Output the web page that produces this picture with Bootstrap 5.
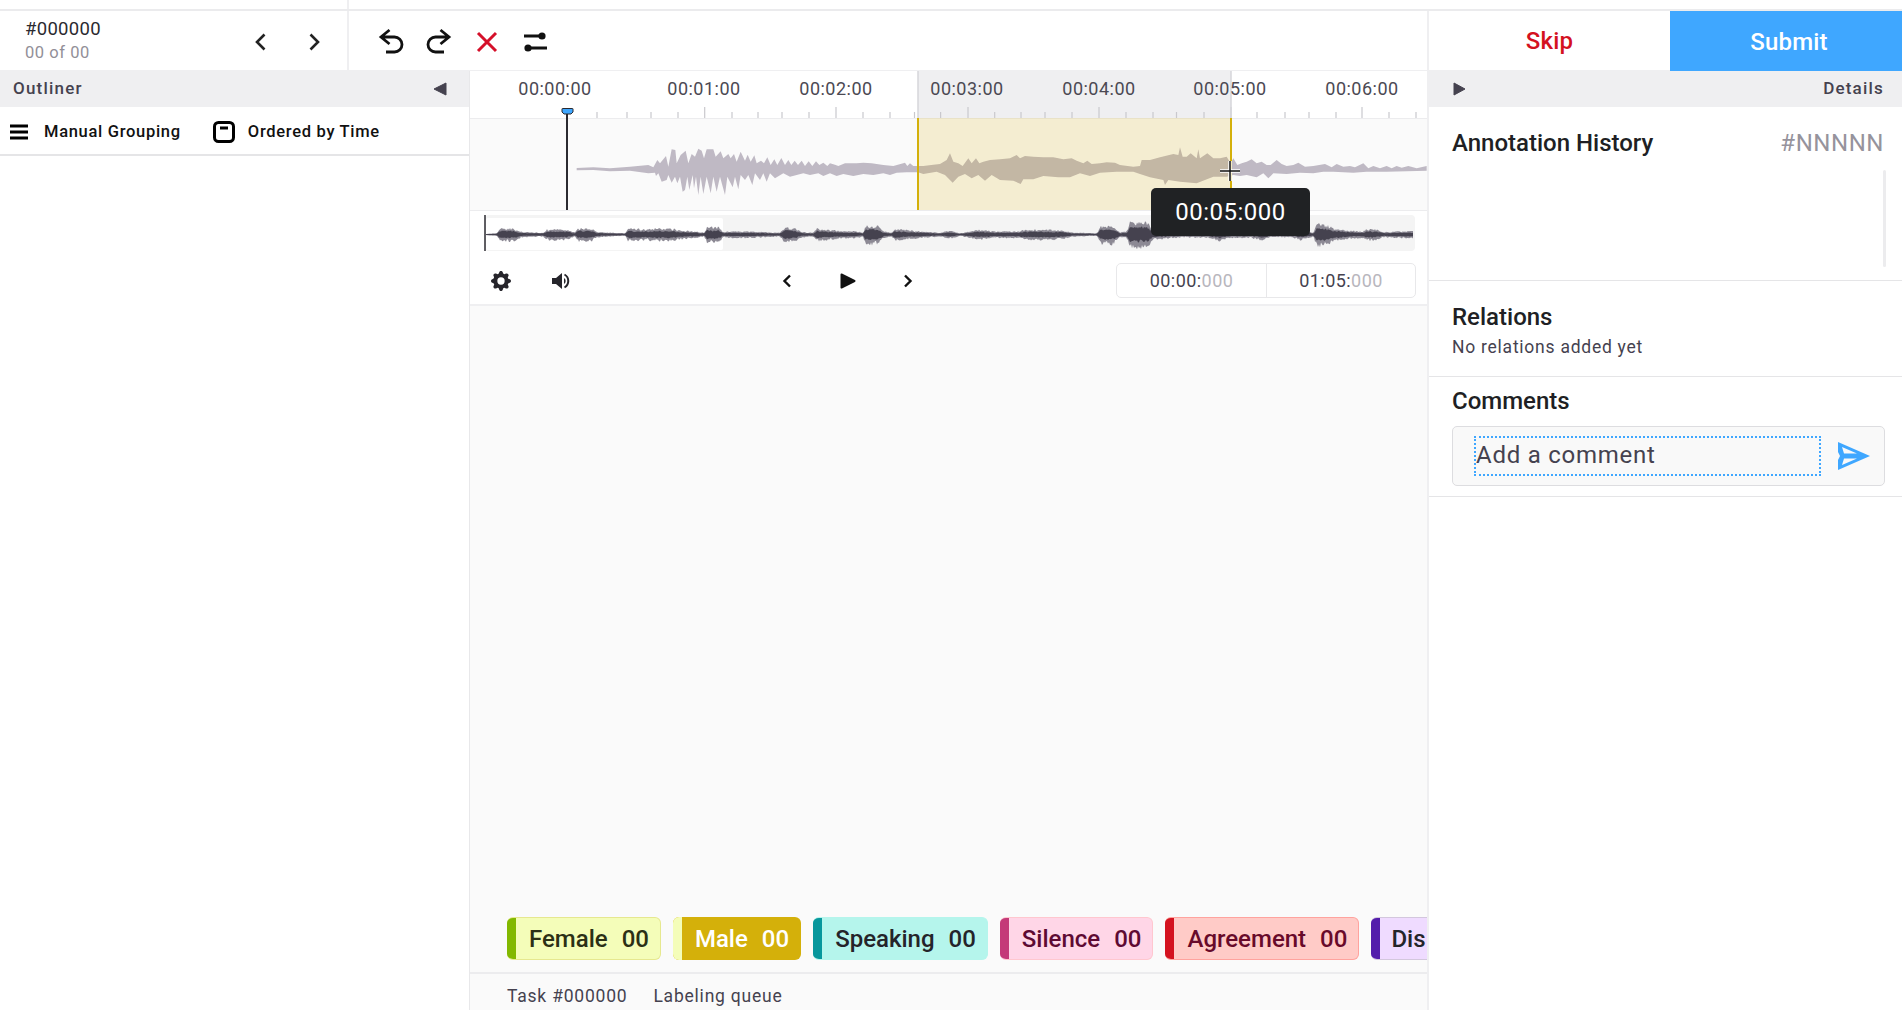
<!DOCTYPE html>
<html lang="en">
<head>
<meta charset="utf-8">
<title>Audio labeling</title>
<link href="https://cdn.jsdelivr.net/npm/bootstrap@5.3.0/dist/css/bootstrap.min.css" rel="stylesheet">
<style>
html,body{height:100%;overflow:hidden}
body{font-family:Roboto,"Liberation Sans",sans-serif;color:#201f24;background:#fff}
.app-shell{height:1010px;overflow:hidden}
.strip-top{height:11px;border-bottom:2px solid #ebebed}
.strip-top>div{width:349px;height:100%;border-right:2px solid #efeff1}
.work-col{width:1429px;border-right:2px solid #efeff1}
.side-col{width:473px}
.tool-bar{height:60px}
.task-cell{width:349px;padding-left:25px;padding-top:1px;border-right:2px solid #efeff1;border-bottom:1px solid #efeff1}
.task-id{font-size:18.5px;letter-spacing:.3px;line-height:24px;color:#2b2a30}
.task-count{font-size:16.5px;letter-spacing:.55px;line-height:24px;color:#928f98}
.chev-a{margin-left:auto}.chev-a svg,.chev-b svg{display:block;margin-top:2px}
.chev-a{margin-right:39px}.chev-b{margin-right:26px}
.tool-icons{padding-left:29px;padding-top:2px;gap:22px;border-bottom:1px solid #efeff1}
.tool-icons svg{display:block}
.panel-head{height:36px;background:#efeff1;color:#45424f;font-size:17px;font-weight:500;letter-spacing:1.2px}
.outliner-col{width:470px;border-right:1px solid #e8e8ea}
.group-row{height:49px;padding-top:3px;border-bottom:2px solid #e5e5e7;font-size:16.5px;font-weight:500;letter-spacing:.7px;color:#111}
.center-col{width:957px;background:#fafafa}
.wave-box{height:180px;background:#fff;position:relative}
.wave-box svg{display:block}
.ruler-label{font:400 18px Roboto,sans-serif;letter-spacing:.5px;fill:#4b4953}
.hover-tip{position:absolute;left:681px;top:117px;width:159px;height:48px;background:#202224;color:#fff;border-radius:5px;font-size:24px;letter-spacing:.5px;font-weight:400}
.cross-mark{position:absolute;left:749px;top:89px}
.player-bar{height:55px;background:#fff;border-bottom:2px solid #efeff1;position:relative;padding:6px 11px 0 0}
.time-box{height:35px;width:300px;border:1px solid #e8e8ea;border-radius:5px;font-size:18px;letter-spacing:.45px;color:#45424f}
.time-box>div{flex:1 1 50%}.time-box>div+div{border-left:1px solid #e8e8ea}
.time-ms{color:#b8b6bd}
.tag-row{padding-left:37px;gap:12px;height:43px;overflow:hidden;margin-top:auto}
.tag-pill{height:43px;flex:none;border-radius:6px;border:1px solid;border-left-width:0;font-size:24px;font-weight:500;display:flex;align-items:center;overflow:hidden;white-space:nowrap;line-height:1}
.tag-pill::before{content:"";width:9px;align-self:stretch;background:var(--strip);flex:none;margin-right:13px}
.tag-pill b{font-weight:500;margin-left:14px;margin-right:11px}
.tag-female{--strip:#82b800;background:#f4fdb9;border-color:#e6e88f;color:#2b3015}
.tag-male{--strip:#f4fdb9;background:#d4b00a;border-width:0;color:#fff}
.tag-male b{margin-right:12px}
.tag-speak{--strip:#08979c;background:#b5f5ec;border-color:#b5f5ec;color:#24242a}
.tag-silence{--strip:#c43a78;background:#ffd6e7;border-color:#ffc7cf;color:#5e0a33}
.tag-agree{--strip:#d4121f;background:#ffcbc7;border-color:#ffa39e;color:#680a2a}
.tag-dis{--strip:#531dab;background:#efdbff;border-color:#d3c7dd;color:#24242a;width:120px}
.tag-dis::before{margin-right:11px}
.foot-line{height:38px;margin-top:12px;border-top:2px solid #ececee;padding:13px 0 0 37px;gap:26px;font-size:17.5px;letter-spacing:.78px;line-height:18px;color:#45424f;white-space:nowrap}
.act-skip,.act-submit{height:60px;border:0;border-radius:0;font-size:24px;font-weight:500;padding:1px 0 0;letter-spacing:.2px}
.act-skip{width:241px;background:#fff;color:#d4121f;border-bottom:1px solid #efeff1}
.act-skip:hover{background:#fff;color:#d4121f}
.act-submit{width:232px;background:#3fa7ff;color:#fff;padding-left:6px}
.act-submit:hover{background:#3fa7ff;color:#fff}
.sect-title{font-size:24px;font-weight:500;line-height:28px;color:#201f24}
.sect-note{font-size:17.5px;letter-spacing:.75px;color:#45424f;line-height:20px;margin-top:6px}
.history-sect{height:174px;padding:22px 18px 0 23px;border-bottom:1px solid #e5e5e7;position:relative}
.history-id{font-size:24px;color:#96939c;letter-spacing:.55px;font-weight:400;line-height:28px}
.scroll-thumb{position:absolute;right:16px;top:63px;width:3px;height:97px;background:#ececee;border-radius:2px}
.rel-sect{height:96px;padding:22px 18px 0 23px;border-bottom:1px solid #e5e5e7}
.com-sect{height:120px;padding:10px 17px 0 23px;border-bottom:1px solid #e5e5e7}
.com-box{height:60px;margin-top:11px;background:#f9f9f9;border:1px solid #dddde0;border-radius:5px;padding:0 14px 0 21px}
.com-input{width:347px;height:40px;border:2px dotted #3fa7ff;font-size:24px;letter-spacing:.75px;color:#45424f;line-height:34px;white-space:nowrap}
</style>
</head>
<body>
<div class="app-shell">
  <div class="strip-top"><div></div></div>
  <div class="d-flex">
    <div class="work-col d-flex flex-column" style="height:999px">
      <div class="tool-bar d-flex">
        <div class="task-cell d-flex align-items-center">
          <div>
            <div class="task-id">#000000</div>
            <div class="task-count">00 of 00</div>
          </div>
          <div class="chev-a"><svg width="14" height="20" viewBox="0 0 14 20"><path d="M10.5 2.5 3 10l7.500 7.500" fill="none" stroke="#222" stroke-width="2.6"/></svg></div>
          <div class="chev-b"><svg width="14" height="20" viewBox="0 0 14 20"><path d="M3.500 2.500 11 10l-7.500 7.500" fill="none" stroke="#222" stroke-width="2.6"/></svg></div>
        </div>
        <div class="tool-icons d-flex align-items-center flex-grow-1">
          <svg width="26" height="28" viewBox="0 0 26 28"><path d="M11.500 2 3 9l8.500 7M3 9h13.500a7.500 7.500 0 0 1 0 15H8" fill="none" stroke="#111" stroke-width="2.800"/></svg>
          <svg width="26" height="28" viewBox="0 0 26 28"><path d="M14.500 2 23 9l-8.500 7M23 9H9.500a7.500 7.500 0 0 0 0 15H18" fill="none" stroke="#111" stroke-width="2.800"/></svg>
          <svg width="26" height="26" viewBox="0 0 26 26"><path d="M4 4l18 18M22 4 4 22" fill="none" stroke="#d5102a" stroke-width="3"/></svg>
          <svg width="26" height="26" viewBox="0 0 26 26"><path d="M2 7h17M8 19h17" fill="none" stroke="#111" stroke-width="2.800"/><circle cx="20" cy="7" r="3.600" fill="#111"/><circle cx="6" cy="19" r="3.600" fill="#111"/></svg>
        </div>
      </div>
      <div class="d-flex flex-grow-1" style="min-height:0">
        <div class="outliner-col">
          <div class="panel-head d-flex align-items-center justify-content-between" style="padding:0 22px 0 13px">
            <span>Outliner</span>
            <svg width="14" height="14" viewBox="0 0 14 14"><path d="M13 1v12L1 7z" fill="#45424f" stroke="#45424f" stroke-linejoin="round"/></svg>
          </div>
          <div class="group-row d-flex align-items-center" style="padding-left:10px">
            <svg width="18" height="16" viewBox="0 0 18 16" class="me-3"><path d="M0 2h18M0 8h18M0 14h18" stroke="#000" stroke-width="3"/></svg>
            <span>Manual Grouping</span>
            <svg width="22" height="22" viewBox="0 0 22 22" style="margin:0 13px 0 32px"><rect x="1.500" y="1.500" width="19" height="19" rx="4" fill="none" stroke="#000" stroke-width="3"/><rect x="7" y="5.500" width="8" height="3" fill="#000"/></svg>
            <span>Ordered by Time</span>
          </div>
        </div>
        <div class="center-col d-flex flex-column" style="min-width:0">
          <div class="wave-box">
            <svg width="957" height="180" viewBox="470 71 957 180" aria-label="Waveform">
              <rect x="918" y="71" width="313" height="47" fill="#efeff1"/>
              <rect x="470" y="118" width="957" height="92" fill="#fafafa"/>
              <path d="M470 118.500h957M470 210.500h957" stroke="#ececee"/>
              <path id="rulerTicks" fill="none" stroke="#c9c8cd" stroke-width="1.200" d=""/>
              <g transform="translate(570 130) scale(.33333)"><polygon fill="#bfb9c4" points="20,114 70,112 120,115 180,110 235,105 250,112 262,90 270,100 288,78 295,110 305,58 316,60 320,100 332,75 347,62 355,100 365,72 375,80 385,56 395,62 402,85 410,58 430,58 437,80 452,64 460,85 475,72 482,85 492,72 500,95 512,65 525,92 533,74 542,95 553,76 560,100 573,92 582,100 592,82 602,105 613,88 622,105 634,84 645,105 655,90 664,105 674,92 684,105 695,92 705,108 716,94 727,108 738,94 748,105 760,98 772,108 780,100 795,104 805,108 825,100 840,100 860,100 880,98 905,100 940,105 970,108 1005,98 1012,108 1020,100 1030,108 1044,108 1060,108 1090,104 1110,102 1130,90 1140,70 1150,95 1165,100 1178,108 1195,85 1205,100 1218,85 1228,100 1240,95 1260,90 1290,88 1290,150 1265,135 1245,152 1225,135 1205,145 1185,132 1165,140 1148,158 1125,135 1100,125 1060,132 1044,127 1010,127 980,128 960,135 940,130 910,135 880,132 850,138 820,132 800,138 780,130 760,138 745,130 720,135 700,130 680,135 660,140 640,130 615,145 600,130 590,155 580,130 570,150 555,130 547,165 535,135 525,150 512,135 505,178 495,140 488,172 472,140 465,195 450,140 440,185 430,140 422,190 410,140 400,192 392,140 385,195 378,140 372,175 368,135 358,180 352,140 345,180 338,185 330,140 322,160 315,140 305,158 295,135 290,150 275,155 265,130 258,138 255,128 235,130 180,122 120,124 70,120 20,121"/></g>
              <g transform="translate(1000 130) scale(.33333)"><polygon fill="#bfb9c4" points="0,88 30,85 50,75 60,85 75,78 100,80 130,82 160,82 190,88 215,85 230,92 250,100 262,92 275,102 300,100 320,97 345,98 360,105 400,110 420,108 425,90 450,90 480,82 520,72 535,75 540,52 548,80 560,80 572,70 590,85 595,58 600,85 622,70 640,85 660,85 680,80 692,100 700,85 712,105 725,100 740,95 755,88 770,100 785,95 800,105 812,105 830,90 845,102 860,108 880,105 895,98 915,110 940,108 975,102 995,112 1010,102 1030,110 1050,108 1065,112 1090,100 1105,115 1120,108 1140,115 1160,108 1175,115 1190,108 1205,113 1225,108 1250,115 1280,108 1280,122 1160,125 1100,125 1060,128 1000,125 970,125 940,130 900,128 860,132 820,130 805,145 790,130 770,142 740,135 720,138 700,135 680,140 640,140 590,160 540,155 505,150 495,165 490,150 450,142 420,132 400,125 350,125 300,128 270,138 240,130 210,142 175,142 130,138 100,148 70,148 62,162 40,152 0,150"/></g>
              <rect x="918" y="118" width="313" height="92" fill="#dbaf00" fill-opacity=".16"/>
              <path d="M918 118v92M1231 118v92" stroke="#d4b00a" stroke-width="2"/>
              <path d="M918 71v47M1231 71v47" stroke="#d6d6da" stroke-width="1.500"/>
              <g class="ruler-label" text-anchor="middle">
                <text x="555" y="95">00:00:00</text>
                <text x="704" y="95">00:01:00</text>
                <text x="836" y="95">00:02:00</text>
                <text x="967" y="95">00:03:00</text>
                <text x="1099" y="95">00:04:00</text>
                <text x="1230" y="95">00:05:00</text>
                <text x="1362" y="95">00:06:00</text>
              </g>
              <path d="M567 114v96" stroke="#2b2a30" stroke-width="2"/>
              <path d="M562.500 108.500h10a.500.500 0 0 1 .500.500v3l-2 2h-7l-2-2v-3a.500.500 0 0 1 .500-.500z" fill="#3fa7ff" stroke="#2b2a30"/>
              <rect x="485" y="215" width="930" height="36" rx="4" fill="#f4f4f4"/>
              <rect x="486" y="218" width="237" height="32" rx="2" fill="#fff"/>
              <path id="ovLight" fill="#8c8994" d=""/>
              <path id="ovDark" fill="#45424f" d=""/>
              <path d="M485 215v36" stroke="#2b2a30" stroke-width="1.500"/>
            </svg>
            <div class="hover-tip d-flex align-items-center justify-content-center">00:05:000</div>
            <svg class="cross-mark" width="22" height="22" viewBox="0 0 22 22"><path d="M1 11h20M11 1v20" stroke="#fff" stroke-width="3.500"/><path d="M1 11h20M11 1v20" stroke="#111" stroke-width="1.500"/></svg>
          </div>
          <div class="player-bar d-flex align-items-center">
            <svg width="20" height="20" viewBox="0 0 16 16" style="margin-left:21px"><path fill="#26252b" d="M9.405 1.050c-.413-1.400-2.397-1.400-2.810 0l-.1.340a1.464 1.464 0 0 1-2.105.872l-.31-.17c-1.283-.698-2.686.705-1.987 1.987l.169.311c.446.820.023 1.841-.872 2.105l-.34.1c-1.400.413-1.400 2.397 0 2.810l.34.1a1.464 1.464 0 0 1 .872 2.105l-.17.31c-.698 1.283.705 2.686 1.987 1.987l.311-.169a1.464 1.464 0 0 1 2.105.872l.1.34c.413 1.400 2.397 1.400 2.810 0l.1-.34a1.464 1.464 0 0 1 2.105-.872l.31.17c1.283.698 2.686-.705 1.987-1.987l-.169-.311a1.464 1.464 0 0 1 .872-2.105l.34-.1c1.400-.413 1.400-2.397 0-2.810l-.34-.1a1.464 1.464 0 0 1-.872-2.105l.17-.31c.698-1.283-.705-2.686-1.987-1.987l-.311.169a1.464 1.464 0 0 1-2.105-.872l-.1-.34zM8 10.930a2.929 2.929 0 1 1 0-5.860 2.929 2.929 0 0 1 0 5.858z"/></svg>
            <svg width="20" height="20" viewBox="0 0 20 20" style="margin-left:40px"><path d="M1 7h4l6-5v16l-6-5H1z" fill="#26252b"/><path d="M13.500 3.500a7.500 7.500 0 0 1 0 13" fill="none" stroke="#26252b" stroke-width="2"/><path d="M13 7a3.500 3.500 0 0 1 0 6z" fill="#26252b"/></svg>
            <svg width="12" height="16" viewBox="0 0 12 16" style="margin-left:210px"><path d="M9 2.500 3.500 8 9 13.500" fill="none" stroke="#111" stroke-width="2.400"/></svg>
            <svg width="18" height="18" viewBox="0 0 18 18" style="margin-left:46px"><path d="M2.500 2.500 15.500 9 2.500 15.500z" fill="#111" stroke="#111" stroke-width="2" stroke-linejoin="round"/></svg>
            <svg width="12" height="16" viewBox="0 0 12 16" style="margin-left:45px"><path d="M3 2.500 8.500 8 3 13.500" fill="none" stroke="#111" stroke-width="2.400"/></svg>
            <div class="time-box d-flex ms-auto">
              <div class="d-flex align-items-center justify-content-center"><span>00:00:<span class="time-ms">000</span></span></div>
              <div class="d-flex align-items-center justify-content-center"><span>01:05:<span class="time-ms">000</span></span></div>
            </div>
          </div>
          <div class="tag-row d-flex">
            <div class="tag-pill tag-female">Female<b>00</b></div>
            <div class="tag-pill tag-male">Male<b>00</b></div>
            <div class="tag-pill tag-speak">Speaking<b>00</b></div>
            <div class="tag-pill tag-silence">Silence<b>00</b></div>
            <div class="tag-pill tag-agree">Agreement<b>00</b></div>
            <div class="tag-pill tag-dis">Dis</div>
          </div>
          <div class="foot-line d-flex">
            <span>Task #000000</span>
            <span>Labeling queue</span>
          </div>
        </div>
      </div>
    </div>
    <div class="side-col">
      <div class="d-flex">
        <button class="btn act-skip" type="button">Skip</button>
        <button class="btn act-submit" type="button">Submit</button>
      </div>
      <div class="panel-head d-flex align-items-center justify-content-between" style="padding:0 18px 0 24px">
        <svg width="13" height="14" viewBox="0 0 13 14"><path d="M1 1v12l11-6z" fill="#45424f" stroke="#45424f" stroke-linejoin="round"/></svg>
        <span>Details</span>
      </div>
      <div class="history-sect">
        <div class="d-flex justify-content-between">
          <span class="sect-title">Annotation History</span>
          <span class="history-id">#NNNNN</span>
        </div>
        <div class="scroll-thumb"></div>
      </div>
      <div class="rel-sect">
        <div class="sect-title">Relations</div>
        <div class="sect-note">No relations added yet</div>
      </div>
      <div class="com-sect">
        <div class="sect-title">Comments</div>
        <div class="com-box d-flex align-items-center justify-content-between">
          <div class="com-input">Add a comment</div>
          <svg width="32" height="28" viewBox="0 0 32 28"><path fill-rule="evenodd" fill="#3fa7ff" d="M0 0l32 14L0 28l0-10 2-4-2-4zM4 5l2 6.500h13zM4 23l2-6.500h13z"/></svg>
        </div>
      </div>
    </div>
  </div>
</div>
<script src="https://cdn.jsdelivr.net/npm/bootstrap@5.3.0/dist/js/bootstrap.bundle.min.js"></script>
<script>
(function(){
  var major=[704.7,836,968,1099,1231,1362];
  var minor=[597,627,651,678,732,758,782,809,863,890,914.5,940.6,994.7,1021,1045,1072,1126,1153,1176.5,1204,1257,1285,1309,1336,1389,1416];
  var d='';
  major.forEach(function(x){d+='M'+x+' 107v11';});
  minor.forEach(function(x){d+='M'+x+' 112v6';});
  document.getElementById('rulerTicks').setAttribute('d',d);
  var a=[[15,1],[50,2],[60,10],[100,10],[125,4],[190,3],[200,8],[260,8],[285,3],[295,10],[335,10],[350,4],[435,2],[445,10],[500,8],[530,10],[580,9],[600,7],[650,5],[672,3],[680,12],[715,12],[730,4],[750,5],[800,5],[900,3],[915,12],[945,10],[965,4],[1000,3],[1010,10],[1050,7],[1130,5],[1150,3],[1155,14],[1195,14],[1210,5],[1235,3],[1245,9],[1300,6],[1380,3]];
  var b=[[0,6],[30,2],[60,5],[90,8],[130,5],[200,5],[230,8],[300,8],[340,6],[370,3],[440,2],[452,14],[490,14],[510,4],[530,5],[540,20],[590,20],[610,8],[700,4],[780,5],[810,10],[840,5],[900,5],[940,9],[960,4],[1020,4],[1050,8],[1090,3],[1100,18],[1130,15],[1150,10],[1200,6],[1240,5],[1250,9],[1280,8],[1300,4],[1390,6]];
  var pts=a.map(function(p){return [480+p[0]/3,p[1]/3];}).concat(b.map(function(p){return [950+p[0]/3,p[1]/3];}));
  function amp(x){
    for(var i=1;i<pts.length;i++){ if(x<=pts[i][0]){var p=pts[i-1],q=pts[i];return p[1]+(q[1]-p[1])*(x-p[0])/Math.max(q[0]-p[0],.01);} }
    return 2;
  }
  var s=7;function rnd(){s=(s*16807)%2147483647;return s/2147483647;}
  var up=[],dn=[],lu=[],ld=[];
  for(var x=486;x<=1413;x+=1){
    var v=amp(x)*1.2,cy=234.5;
    var u=v*(.65+.35*rnd()),w=v*(.65+.35*rnd());
    up.push(x+' '+(cy-u).toFixed(1));dn.unshift(x+' '+(cy+w).toFixed(1));
    var lx=v*(1.1+.6*rnd()),ly=v*(1.15+.8*rnd());
    lu.push(x+' '+(cy-lx).toFixed(1));ld.unshift(x+' '+(cy+ly).toFixed(1));
  }
  document.getElementById('ovDark').setAttribute('d','M'+up.concat(dn).join('L')+'z');
  document.getElementById('ovLight').setAttribute('d','M'+lu.concat(ld).join('L')+'z');
})();
</script>
</body>
</html>
